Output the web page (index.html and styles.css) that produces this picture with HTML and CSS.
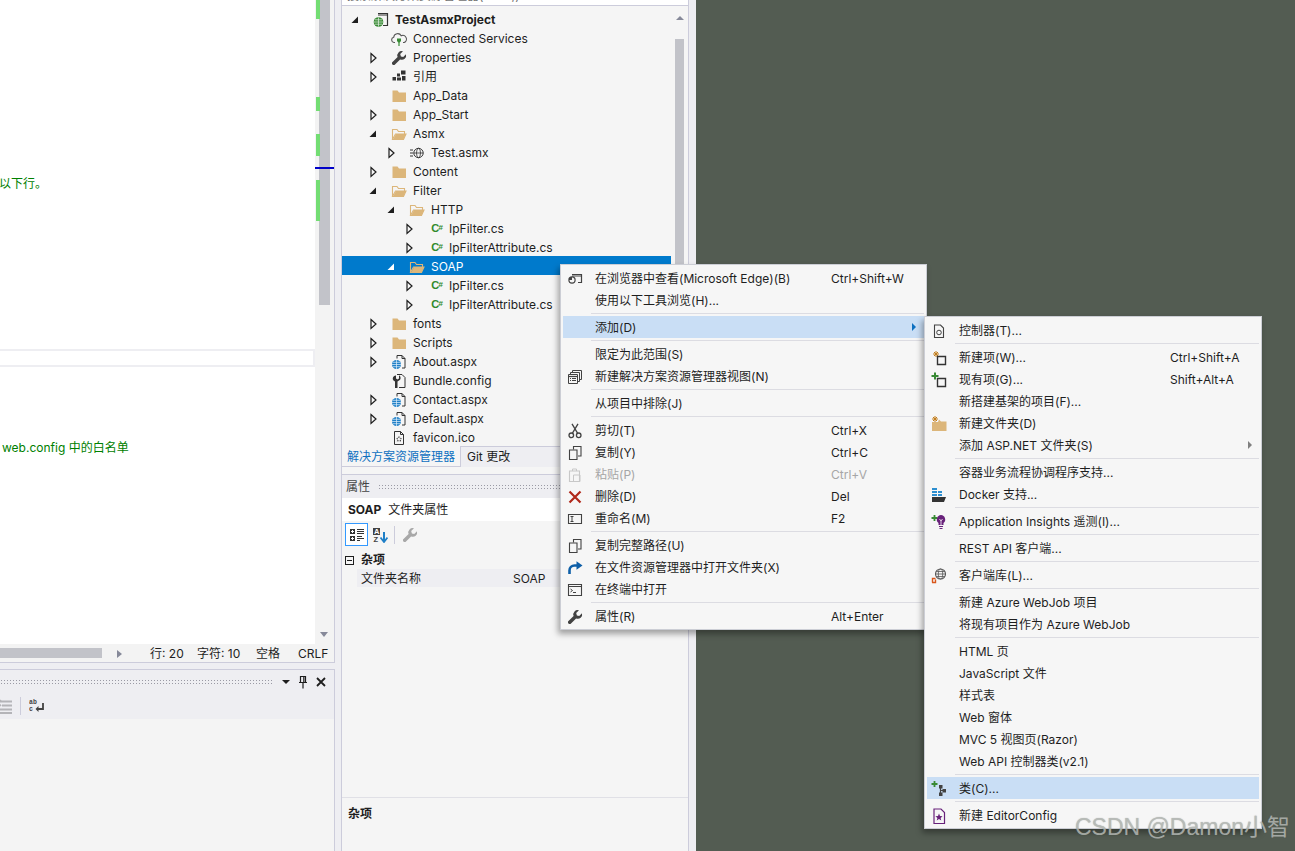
FILE: index.html
```html
<!DOCTYPE html>
<html lang="zh">
<head>
<meta charset="utf-8">
<title>Visual Studio</title>
<link rel="stylesheet" href="styles.css">
</head>
<body>
<svg class="sprite" aria-hidden="true">
  <symbol id="tg-open" viewBox="0 0 14 14"><path d="M10 3.500v6.500H3.500z" fill="#1e1e1e"/></symbol>
  <symbol id="tg-closed" viewBox="0 0 14 14"><path d="M5 2.500l5 4.500-5 4.500z" fill="none" stroke="#1e1e1e" stroke-width="1.200"/></symbol>
  <symbol id="tg-open-w" viewBox="0 0 14 14"><path d="M10 3.500v6.500H3.500z" fill="#fff"/></symbol>
  <symbol id="folder" viewBox="0 0 16 16"><path d="M1.500 2.500h5l1.500 2h7v9.500h-13.500z" fill="#dcb67a"/></symbol>
  <symbol id="folder-open" viewBox="0 0 16 16"><path d="M1.500 13.500v-10h4.500l1.500 2h6v2M1.500 13.500h11l2.500-5.500h-10.500z" fill="none" stroke="#dcb67a" stroke-width="1.100"/><path d="M2 13.500l3-5.500h10l-2.500 5.500z" fill="#dcb67a"/></symbol>
  <symbol id="project" viewBox="0 0 16 16"><path d="M5 1.500h9.500v12H10" fill="none" stroke="#333" stroke-width="1.200"/><path d="M5 3h9.500" stroke="#333"/><circle cx="5.500" cy="10" r="4.800" fill="#388a34"/><path d="M1 10h9M5.500 5.500v9M2 7.800h7M2 12.200h7" stroke="#e6f2e6" stroke-width=".7"/></symbol>
  <symbol id="cloud" viewBox="0 0 16 16"><path d="M4 11.500h-1a2.700 2.700 0 0 1-.3-5.300 4 4 0 0 1 7.500-1.500 3.500 3.500 0 0 1 3 6.800h-1.200" fill="none" stroke="#555" stroke-width="1.100"/><path d="M6 7.500h4v2.500l-1.300 1.500h-1.400l-1.300-1.500z" fill="#388a34"/><path d="M8 11v4" stroke="#388a34" stroke-width="1.200"/></symbol>
  <symbol id="wrench" viewBox="0 0 16 16"><path d="M15 4.300l-2.800 2.800-2.300-.7-.7-2.300 2.800-2.800a4.300 4.300 0 0 0-5.400 5.600l-5.600 5.600v1.500l1 1h1.500l5.600-5.600a4.300 4.300 0 0 0 5.900-5.100z" fill="#424242"/></symbol>
  <symbol id="wrench-g" viewBox="0 0 16 16"><path d="M15 4.300l-2.800 2.800-2.300-.7-.7-2.300 2.800-2.800a4.300 4.300 0 0 0-5.400 5.600l-5.600 5.600v1.500l1 1h1.500l5.600-5.600a4.300 4.300 0 0 0 5.900-5.100z" fill="#a8a8a8"/></symbol>
  <symbol id="refs" viewBox="0 0 16 16"><path d="M10 1.500h4.500v4H10zM6 4.500h3v3H6zM1.500 8h3.500v3.500H1.500zM6 8.500h4v3H6zM11 7h3.500v4.500H11z" fill="#333"/></symbol>
  <symbol id="asmx" viewBox="0 0 16 16"><path d="M1 5h3M1 8h3M1 11h3" stroke="#333"/><circle cx="9.500" cy="8" r="4.700" fill="none" stroke="#333"/><ellipse cx="9.500" cy="8" rx="2" ry="4.700" fill="none" stroke="#333" stroke-width=".8"/><path d="M4.800 8h9.400" stroke="#333" stroke-width=".8"/></symbol>
  <symbol id="aspx" viewBox="0 0 16 16"><path d="M6 1.500h5l3 3v9.500h-3M6 1.500v3M11 1.500v3h3" fill="none" stroke="#333"/><circle cx="5.500" cy="10.500" r="4.500" fill="#1f7fc7"/><path d="M1 10.500h9M5.500 6v9M2 8.300h7M2 12.700h7" stroke="#e3f0fa" stroke-width=".7"/></symbol>
  <symbol id="config" viewBox="0 0 16 16"><path d="M6 1.500h5l3 3v10H8" fill="none" stroke="#333"/><path d="M8 2.500v3l-1.500 1-1.500-1v-3a3 3 0 0 0-2.500 5l1.500 1v6.500h2.500v-6.500l1.500-1a3 3 0 0 0 .5-5z" fill="#333"/></symbol>
  <symbol id="ico" viewBox="0 0 16 16"><path d="M3.500 1.500h6l3 3v10h-9zM9.500 1.500v3h3" fill="none" stroke="#333"/><path d="M8 6.500l.8 1.800 1.900.2-1.400 1.200.5 1.800-1.800-1-1.800 1 .5-1.800-1.400-1.200 1.900-.2z" fill="none" stroke="#444" stroke-dasharray="1 1"/></symbol>
  <symbol id="browser" viewBox="0 0 16 16"><path d="M5 3.500h9.500v8H11" fill="none" stroke="#424242" stroke-width="1.200"/><path d="M5 5h9.500" stroke="#424242"/><circle cx="5" cy="9" r="3.700" fill="#424242"/><path d="M5 6.500a2.500 2.500 0 1 1-2.500 2.500H5z" fill="#f6f6f6"/></symbol>
  <symbol id="newview" viewBox="0 0 16 16"><path d="M5.500 3.500v-2h9v9h-2M3.500 5.500v-2h9v9h-2" fill="none" stroke="#424242"/><path d="M1.500 5.500h9v9h-9z" fill="#f6f6f6" stroke="#424242"/><path d="M1.500 7.500h9" stroke="#424242" stroke-width="1.200"/><path d="M3 9.500h1M5 9.500h4M3 11.500h1M5 11.500h4" stroke="#424242"/></symbol>
  <symbol id="scissors" viewBox="0 0 16 16"><circle cx="4.300" cy="12.300" r="2.300" fill="none" stroke="#424242" stroke-width="1.300"/><circle cx="11.700" cy="12.300" r="2.300" fill="none" stroke="#424242" stroke-width="1.300"/><path d="M5.300 10.300L11 .8M10.700 10.300L5 .8" stroke="#424242" stroke-width="1.300"/></symbol>
  <symbol id="copy" viewBox="0 0 16 16"><path d="M6.500 4.500v-3h7.500v9.500h-3" fill="none" stroke="#424242" stroke-width="1.100"/><path d="M2.500 5h7.500v9.500H2.500z" fill="none" stroke="#424242" stroke-width="1.100"/></symbol>
  <symbol id="paste" viewBox="0 0 16 16"><path d="M2.500 4h10v10.500h-10z" fill="none" stroke="#c8c8c8" stroke-width="1.100"/><path d="M5.500 4V2h4v2M6.500 8h6.500v6.500H6.500z" fill="none" stroke="#c8c8c8"/></symbol>
  <symbol id="del" viewBox="0 0 16 16"><path d="M2.500 2.500l11 11M13.500 2.500l-11 11" stroke="#b0281a" stroke-width="2.200"/></symbol>
  <symbol id="rename" viewBox="0 0 16 16"><path d="M1.500 3.500h13v9h-13z" fill="none" stroke="#424242" stroke-width="1.100"/><path d="M3.500 5.500h3M3.500 10.500h3M5 5.500v5" stroke="#424242"/></symbol>
  <symbol id="share" viewBox="0 0 16 16"><path d="M2.500 14v-3.500a5 5 0 0 1 5-5H11" fill="none" stroke="#0e5fa8" stroke-width="2.600"/><path d="M9.500 1.300l6 4.200-6 4.200z" fill="#0e5fa8"/></symbol>
  <symbol id="terminal" viewBox="0 0 16 16"><path d="M1.500 2.500h13v11h-13z" fill="none" stroke="#424242" stroke-width="1.100"/><path d="M1.500 4.500h13" stroke="#424242"/><path d="M3.500 7l2 1.500-2 1.500M6 10.500h3" fill="none" stroke="#424242"/></symbol>
  <symbol id="controller" viewBox="0 0 16 16"><path d="M3.500 2h6l3 3v9.500h-9z" fill="none" stroke="#424242" stroke-width="1.100"/><circle cx="8" cy="9.500" r="2.300" fill="none" stroke="#424242"/></symbol>
  <symbol id="newitem" viewBox="0 0 16 16"><path d="M5 1v6M2 4h6M3 2l4 4M7 2l-4 4" stroke="#c27d1a"/><path d="M6.500 6.500h8v8h-8z" fill="none" stroke="#333" stroke-width="1.400"/></symbol>
  <symbol id="existing" viewBox="0 0 16 16"><path d="M4 .5v7M.5 4h7" stroke="#388a34" stroke-width="2"/><path d="M6.500 6.500h8v8h-8z" fill="none" stroke="#333" stroke-width="1.400"/></symbol>
  <symbol id="newfolder" viewBox="0 0 16 16"><path d="M1 6h6l1-2.500 2 2h5.500V15H1z" fill="#dcb67a"/><path d="M4 0v6M1 3h6M2 1l4 4M6 1l-4 4" stroke="#c27d1a"/></symbol>
  <symbol id="docker" viewBox="0 0 16 16"><path d="M1 1h5v2H1zM1 4h5v2H1zM1 7h5v2H1zM7 4h4v2H7zM7 7h4v2H7z" fill="#2d8ecf"/><path d="M1 10h14l-2 5H1z" fill="#333"/></symbol>
  <symbol id="insights" viewBox="0 0 16 16"><path d="M3.500 1v6M.5 4h6" stroke="#388a34" stroke-width="1.800"/><path d="M10 1a4.500 4.500 0 0 1 2.500 8v2h-5V9A4.500 4.500 0 0 1 10 1z" fill="#68217a"/><path d="M8.500 5l1.500 2 1.500-2M10 7v4" stroke="#fff" fill="none" stroke-width=".8"/><path d="M8 12.500h4M8.500 14.500h3" stroke="#68217a" stroke-width="1.200"/></symbol>
  <symbol id="clientlib" viewBox="0 0 16 16"><circle cx="9.500" cy="6" r="5" fill="none" stroke="#555" stroke-width="1.100"/><ellipse cx="9.500" cy="6" rx="2.200" ry="5" fill="none" stroke="#555" stroke-width=".8"/><path d="M4.500 6h10M5.500 3.500h8M5.500 8.500h8" stroke="#555" stroke-width=".8"/><path d="M1.500 14.500v-4h3M1 14.500h3.500v-3" fill="none" stroke="#d9571c" stroke-width="1.400"/></symbol>
  <symbol id="classico" viewBox="0 0 16 16"><path d="M3.500 0v6M.5 3h6" stroke="#388a34" stroke-width="1.800"/><path d="M8 4h3.500v3.500H8zM11.500 8H15v3.500h-3.500zM8 11.500h3.500V15H8z" fill="#424242"/><path d="M9.500 6v7M9.500 9.500h3" stroke="#424242" stroke-width="1.200"/></symbol>
  <symbol id="editorconfig" viewBox="0 0 16 16"><path d="M3 1h7l3.500 3.500v11H3z" fill="none" stroke="#68217a" stroke-width="1.200"/><path d="M8 5.500l1 2.500 2.600.2-2 1.700.7 2.600L8 11l-2.300 1.500.7-2.600-2-1.700L7 8z" fill="#68217a"/></symbol>
  <symbol id="cat" viewBox="0 0 16 16"><path d="M1 2h5v5H1zM1 9h5v5H1z" fill="#333"/><path d="M2 4.500h3M3.500 3v3M2 11.500h3M3.500 10v3" stroke="#fff"/><path d="M8 2.500h7M8 4.500h7M8 6.500h7M8 9.500h5M8 11.500h7M8 13.500h3" stroke="#333"/></symbol>
  <symbol id="clear" viewBox="0 0 16 16"><path d="M0 3.500h16M6 7.500h10M0 11.500h16M0 15h16" stroke="#b4b4b8" stroke-width="2"/><path d="M0 2l5 6M5 2L0 8" stroke="#b4b4b8" stroke-width="1.500"/></symbol>
  <symbol id="pin" viewBox="0 0 16 16"><path d="M5.500 2.500h5v6h-5zM8.800 3v5M4 8.500h8M8 9v5.500" fill="none" stroke="#1e1e1e" stroke-width="1.200"/></symbol>
  <symbol id="close" viewBox="0 0 16 16"><path d="M4 4l8 8M12 4l-8 8" stroke="#1e1e1e" stroke-width="1.800"/></symbol>
</svg>

<div class="app">
  <section class="left">
    <div class="docwell">
      <div class="editor-row">
        <div class="editor">
          <div class="pane-top"><p class="comment">以下行。</p></div>
          <div class="findbar"></div>
          <div class="pane-bottom"><p class="comment">web.config 中的白名单</p></div>
        </div>
        <div class="vscroll">
          <i class="mark mark-a"></i><i class="mark mark-b"></i><i class="mark mark-c"></i><i class="mark mark-d"></i>
          <i class="caret-line"></i>
          <div class="vthumb"></div>
          <i class="arrow-down"></i>
        </div>
      </div>
      <div class="statusbar">
        <div class="hthumb"></div>
        <i class="arrow-right"></i>
        <span class="st st-line">行: 20</span>
        <span class="st st-char">字符: 10</span>
        <span class="st st-space">空格</span>
        <span class="st st-crlf">CRLF</span>
      </div>
    </div>
    <div class="output">
      <div class="out-head">
        <div class="gripper out-grip"></div>
        <i class="arrow-drop"></i>
        <svg class="out-pin"><use href="#pin"/></svg>
        <svg class="out-close"><use href="#close"/></svg>
      </div>
      <div class="out-tools">
        <svg class="i16 out-clear"><use href="#clear"/></svg>
        <i class="tool-sep"></i>
        <svg class="i16" viewBox="0 0 16 16"><text class="svgtxt-s" x="0" y="6">ab</text><text class="svgtxt-s" x="0" y="13">c</text><path d="M14 5v6H8" fill="none" stroke="#424242" stroke-width="1.800"/><path d="M9.500 8l-3 3 3 3z" fill="#424242"/></svg>
      </div>
      <div class="out-body"></div>
    </div>
  </section>

  <section class="mid">
    <div class="se-panel">
      <div class="search"><span class="search-text">搜索解决方案资源管理器(Ctrl+;)</span></div>
      <div class="tree-wrap">
        <div class="tree">
          <div class="row lv0"><svg class="tg"><use href="#tg-open"/></svg><svg class="i16"><use href="#project"/></svg><b class="name">TestAsmxProject</b></div>
          <div class="row lv1"><span class="tg"></span><svg class="i16"><use href="#cloud"/></svg><span class="name">Connected Services</span></div>
          <div class="row lv1"><svg class="tg"><use href="#tg-closed"/></svg><svg class="i16"><use href="#wrench"/></svg><span class="name">Properties</span></div>
          <div class="row lv1"><svg class="tg"><use href="#tg-closed"/></svg><svg class="i16"><use href="#refs"/></svg><span class="name">引用</span></div>
          <div class="row lv1"><span class="tg"></span><svg class="i16"><use href="#folder"/></svg><span class="name">App_Data</span></div>
          <div class="row lv1"><svg class="tg"><use href="#tg-closed"/></svg><svg class="i16"><use href="#folder"/></svg><span class="name">App_Start</span></div>
          <div class="row lv1"><svg class="tg"><use href="#tg-open"/></svg><svg class="i16"><use href="#folder-open"/></svg><span class="name">Asmx</span></div>
          <div class="row lv2"><svg class="tg"><use href="#tg-closed"/></svg><svg class="i16"><use href="#asmx"/></svg><span class="name">Test.asmx</span></div>
          <div class="row lv1"><svg class="tg"><use href="#tg-closed"/></svg><svg class="i16"><use href="#folder"/></svg><span class="name">Content</span></div>
          <div class="row lv1"><svg class="tg"><use href="#tg-open"/></svg><svg class="i16"><use href="#folder-open"/></svg><span class="name">Filter</span></div>
          <div class="row lv2"><svg class="tg"><use href="#tg-open"/></svg><svg class="i16"><use href="#folder-open"/></svg><span class="name">HTTP</span></div>
          <div class="row lv3"><svg class="tg"><use href="#tg-closed"/></svg><span class="i16 cs">C<small>#</small></span><span class="name">IpFilter.cs</span></div>
          <div class="row lv3"><svg class="tg"><use href="#tg-closed"/></svg><span class="i16 cs">C<small>#</small></span><span class="name">IpFilterAttribute.cs</span></div>
          <div class="row lv2 selected"><svg class="tg"><use href="#tg-open-w"/></svg><svg class="i16"><use href="#folder-open"/></svg><span class="name">SOAP</span></div>
          <div class="row lv3"><svg class="tg"><use href="#tg-closed"/></svg><span class="i16 cs">C<small>#</small></span><span class="name">IpFilter.cs</span></div>
          <div class="row lv3"><svg class="tg"><use href="#tg-closed"/></svg><span class="i16 cs">C<small>#</small></span><span class="name">IpFilterAttribute.cs</span></div>
          <div class="row lv1"><svg class="tg"><use href="#tg-closed"/></svg><svg class="i16"><use href="#folder"/></svg><span class="name">fonts</span></div>
          <div class="row lv1"><svg class="tg"><use href="#tg-closed"/></svg><svg class="i16"><use href="#folder"/></svg><span class="name">Scripts</span></div>
          <div class="row lv1"><svg class="tg"><use href="#tg-closed"/></svg><svg class="i16"><use href="#aspx"/></svg><span class="name">About.aspx</span></div>
          <div class="row lv1"><span class="tg"></span><svg class="i16"><use href="#config"/></svg><span class="name">Bundle.config</span></div>
          <div class="row lv1"><svg class="tg"><use href="#tg-closed"/></svg><svg class="i16"><use href="#aspx"/></svg><span class="name">Contact.aspx</span></div>
          <div class="row lv1"><svg class="tg"><use href="#tg-closed"/></svg><svg class="i16"><use href="#aspx"/></svg><span class="name">Default.aspx</span></div>
          <div class="row lv1"><span class="tg"></span><svg class="i16"><use href="#ico"/></svg><span class="name">favicon.ico</span></div>
        </div>
        <div class="tree-scroll"><i class="arrow-up"></i><div class="tree-thumb"></div></div>
      </div>
      <div class="tabs">
        <div class="tab active">解决方案资源管理器</div>
        <div class="tab">Git 更改</div>
      </div>
      <div class="props">
        <div class="props-head"><span>属性</span><div class="gripper props-grip"></div></div>
        <div class="props-title"><b>SOAP</b><span>文件夹属性</span></div>
        <div class="props-tools">
          <span class="tbtn on"><svg class="i16"><use href="#cat"/></svg></span>
          <span class="tbtn"><svg class="i16" viewBox="0 0 16 16"><rect x="1" y="1" width="7" height="7" fill="#424242"/><text class="svgtxt-w" x="2" y="7">A</text><text class="svgtxt" x="1.500" y="15">Z</text><path d="M12 5v9" stroke="#1f7fc7" stroke-width="2"/><path d="M8.500 10.500L12 15l3.500-4.500" fill="none" stroke="#1f7fc7" stroke-width="1.800"/></svg></span>
          <i class="tool-sep"></i>
          <span class="tbtn"><svg class="i16"><use href="#wrench-g"/></svg></span>
        </div>
        <div class="props-section"><i class="minus"></i><b class="sec-name">杂项</b></div>
        <div class="props-row"><span class="p-key">文件夹名称</span><span class="p-val">SOAP</span></div>
        <div class="props-fill"></div>
        <div class="props-desc"><b>杂项</b></div>
      </div>
    </div>
  </section>

  <section class="desktop"></section>
</div>

<nav class="menu menu-main">
  <div class="mi"><svg class="i16"><use href="#browser"/></svg><span class="lb">在浏览器中查看(Microsoft Edge)(B)</span><span class="sc">Ctrl+Shift+W</span></div>
  <div class="mi"><span class="i16"></span><span class="lb">使用以下工具浏览(H)...</span></div>
  <div class="sep"></div>
  <div class="mi hl"><span class="i16"></span><span class="lb">添加(D)</span><i class="sub sub-blue"></i></div>
  <div class="sep"></div>
  <div class="mi"><span class="i16"></span><span class="lb">限定为此范围(S)</span></div>
  <div class="mi"><svg class="i16"><use href="#newview"/></svg><span class="lb">新建解决方案资源管理器视图(N)</span></div>
  <div class="sep"></div>
  <div class="mi"><span class="i16"></span><span class="lb">从项目中排除(J)</span></div>
  <div class="sep"></div>
  <div class="mi"><svg class="i16"><use href="#scissors"/></svg><span class="lb">剪切(T)</span><span class="sc">Ctrl+X</span></div>
  <div class="mi"><svg class="i16"><use href="#copy"/></svg><span class="lb">复制(Y)</span><span class="sc">Ctrl+C</span></div>
  <div class="mi off"><svg class="i16"><use href="#paste"/></svg><span class="lb">粘贴(P)</span><span class="sc">Ctrl+V</span></div>
  <div class="mi"><svg class="i16"><use href="#del"/></svg><span class="lb">删除(D)</span><span class="sc">Del</span></div>
  <div class="mi"><svg class="i16"><use href="#rename"/></svg><span class="lb">重命名(M)</span><span class="sc">F2</span></div>
  <div class="sep"></div>
  <div class="mi"><svg class="i16"><use href="#copy"/></svg><span class="lb">复制完整路径(U)</span></div>
  <div class="mi"><svg class="i16"><use href="#share"/></svg><span class="lb">在文件资源管理器中打开文件夹(X)</span></div>
  <div class="mi"><svg class="i16"><use href="#terminal"/></svg><span class="lb">在终端中打开</span></div>
  <div class="sep"></div>
  <div class="mi"><svg class="i16"><use href="#wrench"/></svg><span class="lb">属性(R)</span><span class="sc">Alt+Enter</span></div>
</nav>

<nav class="menu menu-sub">
  <div class="mi"><svg class="i16"><use href="#controller"/></svg><span class="lb">控制器(T)...</span></div>
  <div class="sep"></div>
  <div class="mi"><svg class="i16"><use href="#newitem"/></svg><span class="lb">新建项(W)...</span><span class="sc">Ctrl+Shift+A</span></div>
  <div class="mi"><svg class="i16"><use href="#existing"/></svg><span class="lb">现有项(G)...</span><span class="sc">Shift+Alt+A</span></div>
  <div class="mi"><span class="i16"></span><span class="lb">新搭建基架的项目(F)...</span></div>
  <div class="mi"><svg class="i16"><use href="#newfolder"/></svg><span class="lb">新建文件夹(D)</span></div>
  <div class="mi"><span class="i16"></span><span class="lb">添加 ASP.NET 文件夹(S)</span><i class="sub sub-gray"></i></div>
  <div class="sep"></div>
  <div class="mi"><span class="i16"></span><span class="lb">容器业务流程协调程序支持...</span></div>
  <div class="mi"><svg class="i16"><use href="#docker"/></svg><span class="lb">Docker 支持...</span></div>
  <div class="sep"></div>
  <div class="mi"><svg class="i16"><use href="#insights"/></svg><span class="lb">Application Insights 遥测(I)...</span></div>
  <div class="sep"></div>
  <div class="mi"><span class="i16"></span><span class="lb">REST API 客户端...</span></div>
  <div class="sep"></div>
  <div class="mi"><svg class="i16"><use href="#clientlib"/></svg><span class="lb">客户端库(L)...</span></div>
  <div class="sep"></div>
  <div class="mi"><span class="i16"></span><span class="lb">新建 Azure WebJob 项目</span></div>
  <div class="mi"><span class="i16"></span><span class="lb wide">将现有项目作为 Azure WebJob</span></div>
  <div class="sep"></div>
  <div class="mi"><span class="i16"></span><span class="lb">HTML 页</span></div>
  <div class="mi"><span class="i16"></span><span class="lb">JavaScript 文件</span></div>
  <div class="mi"><span class="i16"></span><span class="lb">样式表</span></div>
  <div class="mi"><span class="i16"></span><span class="lb">Web 窗体</span></div>
  <div class="mi"><span class="i16"></span><span class="lb">MVC 5 视图页(Razor)</span></div>
  <div class="mi"><span class="i16"></span><span class="lb">Web API 控制器类(v2.1)</span></div>
  <div class="sep"></div>
  <div class="mi hl"><svg class="i16"><use href="#classico"/></svg><span class="lb">类(C)...</span></div>
  <div class="sep"></div>
  <div class="mi"><svg class="i16"><use href="#editorconfig"/></svg><span class="lb">新建 EditorConfig</span></div>
</nav>

<div class="watermark">CSDN @Damon小智</div>
</body>
</html>
```
FILE: styles.css
```css
* { box-sizing: border-box; }
html, body { margin: 0; height: 100%; overflow: hidden; }
body {
  font-family: Inter, "Noto Sans CJK SC", sans-serif;
  font-size: 12px;
  line-height: 16px;
  color: #1e1e1e;
  background: #535c52;
}
i { display: block; font-style: normal; }
p { margin: 0; }
b { font-weight: 700; }
.sprite { position: absolute; width: 0; height: 0; }
.svgtxt, .svgtxt-w { font: 700 7.500px "Liberation Sans", sans-serif; }
.svgtxt { fill: #424242; }
.svgtxt-w { fill: #fff; }
.svgtxt-s { font: 700 6.500px "Liberation Mono", monospace; fill: #424242; }

.app { display: flex; height: 851px; width: 1295px; }

/* left column */
.left { flex: 0 0 341px; background: #eeeef2; padding-right: 6px; display: flex; flex-direction: column; }
.docwell { flex: 0 0 663px; background: #f3f3f3; border-right: 1px solid #ccccdb; border-bottom: 1px solid #ccccdb; display: flex; flex-direction: column; }
.editor-row { flex: 0 0 644px; display: flex; }
.editor { flex: 0 0 315px; background: #fff; display: flex; flex-direction: column; color: #008000; }
.pane-top { flex: 0 0 349px; padding-top: 176px; }
.findbar { flex: 0 0 18px; background: #fff; border: 2px solid #eeeef2; border-left: 0; }
.pane-bottom { flex: 1; padding: 73px 0 0 2px; }
.pane-top .comment { margin-left: -1px; }
.vscroll { flex: 1; position: relative; background: #f3f3f3; }
.vthumb { position: absolute; left: 4px; top: 0; width: 11px; height: 305px; background: #c2c3c9; }
.mark { position: absolute; left: 1px; width: 4px; background: #73dd73; z-index: 1; }
.mark-a { top: 0; height: 19px; }
.mark-b { top: 97px; height: 14px; }
.mark-c { top: 134px; height: 22px; }
.mark-d { top: 180px; height: 41px; }
.caret-line { position: absolute; left: 0; right: 0; top: 167px; height: 2px; background: #0000c8; z-index: 2; }
.arrow-down { position: absolute; left: 5px; top: 632px; border: 4.500px solid transparent; border-top: 5px solid #868999; border-bottom: 0; }

.statusbar { flex: 1; display: flex; align-items: center; padding-top: 1px; }
.hthumb { flex: 0 0 102px; height: 10px; background: #c2c3c9; margin-top: -1px; }
.arrow-right { margin-left: 15px; border: 4.500px solid transparent; border-left: 5px solid #868999; border-right: 0; }
.st { white-space: nowrap; }
.st-line { margin-left: 28px; width: 47px; }
.st-char { width: 59px; }
.st-space { width: 42px; }

.output { flex: 1; margin-top: 6px; border-top: 1px solid #ccccdb; border-right: 1px solid #ccccdb; display: flex; flex-direction: column; background: #f5f5f5; }
.out-head { flex: 0 0 23px; background: #eeeef2; display: flex; align-items: center; }
.gripper { height: 5px; background: radial-gradient(circle, #9a9aa5 .7px, transparent .9px) 0 0 / 3px 3px; }
.out-grip { width: 272px; }
.arrow-drop { margin-left: 10px; border: 4px solid transparent; border-top: 4px solid #1e1e1e; border-bottom: 0; }
.out-pin, .out-close { width: 16px; height: 16px; }
.out-pin { margin-left: 5px; }
.out-close { margin-left: 2px; }
.out-tools { flex: 0 0 26px; background: #eeeef2; display: flex; align-items: center; }
.out-clear { margin-left: -4px; }
.out-tools .tool-sep { margin: 0 8px 0 8px; }
.out-body { flex: 1; background: #f4f4f4; }
.tool-sep { width: 1px; height: 18px; background: #ccccdb; }

/* middle column */
.mid { flex: 0 0 355px; background: #eeeef2; padding-right: 7px; }
.se-panel { height: 851px; background: #f5f5f5; border-left: 1px solid #ccccdb; border-right: 1px solid #ccccdb; display: flex; flex-direction: column; }
.search { flex: 0 0 6px; background: #fff; border-bottom: 1px solid #ccccdb; overflow: hidden; color: #717171; padding-left: 5px; }
.search-text { display: block; margin-top: -12px; }
.tree-wrap { flex: 0 0 440px; padding-top: 3px; display: flex; background: #f5f5f5; }
.tree { flex: 0 0 329px; }
.row { height: 19px; display: flex; align-items: center; white-space: nowrap; padding-top: 2px; }
.lv0 { padding-left: 6px; }
.lv1 { padding-left: 24px; }
.lv2 { padding-left: 42px; }
.lv3 { padding-left: 60px; }
.tg { flex: 0 0 14px; width: 14px; height: 14px; margin-right: 11px; }
.i16 { flex: 0 0 16px; width: 16px; height: 16px; display: block; }
.name { margin-left: 6px; font-weight: 400; }
b.name { font-weight: 700; }
.selected { background: #007acc; color: #fff; }
.cs { color: #2f8a2b; font: 700 11px/14px "Liberation Sans", sans-serif; text-align: right; white-space: nowrap; }
.cs small { font: 700 8px/8px "Liberation Mono", monospace; vertical-align: 2px; margin-left: -1px; }
.tree-scroll { margin-left: 4px; flex: 0 0 9px; display: flex; flex-direction: column; align-items: center; }
.arrow-up { margin-top: 7px; border: 4px solid transparent; border-bottom: 4px solid #868999; border-top: 0; }
.tree-thumb { margin-top: 19px; width: 9px; flex: 1; background: #c2c3c9; }

.tabs { flex: 0 0 21px; background: #eeeef2; display: flex; border-top: 1px solid #ccccdb; }
.tab { padding: 1px 6px 0; line-height: 18px; white-space: nowrap; }
.tab.active { flex: 0 0 119px; margin-top: -1px; background: #f5f5f5; color: #0e70c0; border-right: 1px solid #ccccdb; border-bottom: 1px solid #ccccdb; padding: 2px 0 0 5px; }
.tab + .tab { padding-left: 6px; }

.props { flex: 1; margin-top: 7px; border-top: 1px solid #ccccdb; display: flex; flex-direction: column; }
.props-head { flex: 0 0 23px; background: #eeeef2; display: flex; align-items: center; padding-left: 4px; color: #444; }
.props-grip { margin-left: 8px; flex: 1; }
.props-title { flex: 0 0 23px; background: #fff; display: flex; align-items: center; padding-left: 6px; }
.props-title span { margin-left: 7px; }
.props-tools { flex: 0 0 27px; display: flex; align-items: center; padding-left: 3px; background: #f5f5f5; }
.tbtn { width: 23px; height: 23px; display: flex; align-items: center; justify-content: center; border: 1px solid transparent; }
.tbtn.on { border-color: #3399ff; background: #fff; }
.props-tools .tool-sep { margin: 0 3px 0 3px; }
.props-section { flex: 0 0 21px; padding: 3px 0 0 3px; display: flex; align-items: center; }
.minus { width: 9px; height: 9px; border: 1px solid #1e1e1e; background: linear-gradient(#1e1e1e, #1e1e1e) center / 5px 1px no-repeat; }
.sec-name { margin-left: 7px; }
.props-row { flex: 0 0 18px; display: flex; align-items: center; background: #eeeef2; margin-left: 15px; padding-top: 2px; }
.p-key { flex: 0 0 153px; padding-left: 4px; }
.p-val { padding-left: 3px; }
.props-fill { flex: 1; }
.props-desc { flex: 0 0 54px; border-top: 1px solid #e0e0e6; padding: 8px 0 0 6px; }

.desktop { flex: 1; background: #535c52; }

/* context menus */
.menu { position: absolute; background: #f6f6f6; border: 1px solid #ccced5; padding: 2px; box-shadow: -2px 4px 6px rgba(0, 0, 0, .35); }
.menu-main { left: 560px; top: 264px; width: 367px; height: 366px; }
.menu-sub { left: 924px; top: 316px; width: 338px; height: 513px; }
.mi { height: 22px; display: flex; align-items: center; padding: 2px 0 0 4px; white-space: nowrap; position: relative; }
.mi .lb { margin-left: 12px; }
.menu-main .lb { flex: 0 0 236px; }
.menu-sub .lb { flex: 0 0 211px; }
.menu-sub .lb.wide { flex: 1; }
.menu .hl { background: #c9def5; }
.off { color: #a6a6a6; }
.sep { height: 5px; margin-left: 28px; padding: 2px 0; }
.sep::before { content: ""; display: block; height: 1px; background: #dcdce2; }
.sub { position: absolute; top: 7px; border: 4px solid transparent; border-right: 0; }
.sub-blue { right: 8px; border-left-color: #0e70c0; }
.sub-gray { right: 7px; border-left-color: #808080; }

.watermark { position: absolute; right: 5px; top: 813px; font: 23px/28px "Liberation Sans", "Noto Sans CJK SC", sans-serif; color: rgba(185, 190, 185, .8); text-shadow: 0 0 1px rgba(90, 90, 90, .5); white-space: nowrap; }
```
